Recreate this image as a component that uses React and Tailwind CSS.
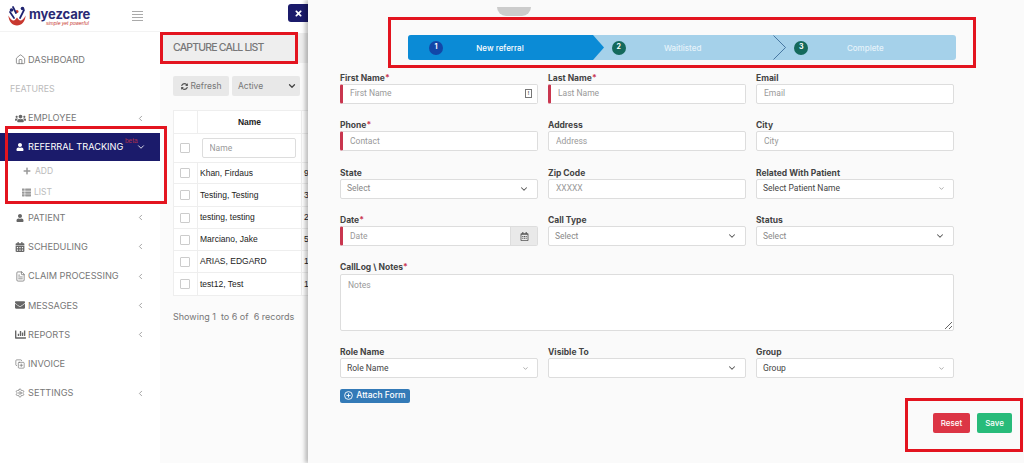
import { ChevronDown, ChevronLeft, Home, Settings, CopyPlus, FileText } from "lucide-react";
import {
  FaUsers,
  FaUser,
  FaPlus,
  FaThList,
  FaCalendarAlt,
  FaEnvelope,
  FaChartBar,
  FaSyncAlt,
  FaTimes,
  FaRegCalendarAlt,
} from "react-icons/fa";

const sans = "font-['Inter','Noto_Sans',sans-serif]";
const arial = "font-['Liberation_Sans',Arial,sans-serif]";
const roboto = "font-['Roboto','Liberation_Sans',sans-serif]";

const Logo = () => (
  <div className="flex items-center pl-[7px] pt-[6px]">
    <svg width="20" height="21" viewBox="0 0 20 21" fill="none">
      <path d="M1.5 9.5c0 6 4 10 8.5 10s8.5-4 8.5-10c-1.5 3.5-3.5 5-5 5-1.500 0-2.500-1.500-3.500-3-1 1.500-2 3-3.500 3s-3.500-1.500-5-5z" fill="#c8382f" />
      <circle cx="4.500" cy="4" r="1.800" fill="#1f2370" />
      <circle cx="15.500" cy="2.500" r="1.800" fill="#1f2370" />
      <circle cx="10" cy="5.500" r="1.500" fill="#c8382f" />
      <path d="M3 6l4 6M17 4l-4 8M6 1l3 6" stroke="#1f2370" strokeWidth="1.700" strokeLinecap="round" />
    </svg>
    <div className="ml-[2px] flex flex-col items-start">
      <span className={`${sans} text-[13px] font-bold leading-[13px] tracking-[-0.1px] text-[#2a2a74]`}>myezcare</span>
      <span className={`${arial} ml-[17px] text-[5px] italic leading-[5px] text-[#c8382f]`}>simple yet powerful</span>
    </div>
  </div>
);

const NavItem = ({ icon, label, arrow = true }) => (
  <div className="flex h-[29.3px] items-center pl-[12px] pr-[15px]">
    <span className="flex w-[16px] justify-center text-[#666]">{icon}</span>
    <span className={`${sans} flex-1 text-[9.200px] text-[#777]`}>{label}</span>
    {arrow && <ChevronLeft size={9} className="text-[#888]" />}
  </div>
);

const Sidebar = () => (
  <aside className="w-[160px] shrink-0 bg-white">
    <div className="flex h-[32px] items-start justify-between border-b border-[#f3f3f3]">
      <Logo />
      <div className="mr-[17px] mt-[11px] flex w-[11px] flex-col gap-[2px]">
        <span className="h-px bg-[#aaa]" />
        <span className="h-px bg-[#aaa]" />
        <span className="h-px bg-[#aaa]" />
        <span className="h-px bg-[#aaa]" />
      </div>
    </div>
    <div className="mt-[13px]">
      <NavItem icon={<Home size={11} strokeWidth={1.500} />} label="DASHBOARD" arrow={false} />
      <div className={`${sans} flex h-[29.3px] items-center pl-[10px] text-[8.800px] text-[#bbb]`}>FEATURES</div>
      <NavItem icon={<FaUsers size={11} />} label="EMPLOYEE" />
      <div className="relative flex h-[28px] items-center bg-[#1b1b6b] pl-[12px] pr-[14px] text-white">
        <span className="flex w-[16px] justify-center"><FaUser size={8} /></span>
        <span className={`${sans} flex-1 text-[9.200px]`}>REFERRAL TRACKING</span>
        <ChevronDown size={10} />
        <span className={`${arial} absolute left-[125px] top-[5px] text-[6.500px] leading-[6px] text-[#b0304a]`}>beta</span>
      </div>
      <div className="flex h-[21px] items-center pl-[23px] text-[#999]">
        <FaPlus size={8} />
        <span className={`${sans} ml-[4px] text-[8.500px] text-[#bbb]`}>ADD</span>
      </div>
      <div className="flex h-[21px] items-center pl-[22px] text-[#999]">
        <FaThList size={9} />
        <span className={`${sans} ml-[3px] text-[8.500px] text-[#bbb]`}>LIST</span>
      </div>
      <NavItem icon={<FaUser size={8} />} label="PATIENT" />
      <NavItem icon={<FaCalendarAlt size={10} />} label="SCHEDULING" />
      <NavItem icon={<FileText size={11} strokeWidth={1.500} />} label="CLAIM PROCESSING" />
      <NavItem icon={<FaEnvelope size={10} />} label="MESSAGES" />
      <NavItem icon={<FaChartBar size={11} />} label="REPORTS" />
      <NavItem icon={<CopyPlus size={10} strokeWidth={1.500} />} label="INVOICE" arrow={false} />
      <NavItem icon={<Settings size={10} strokeWidth={1.500} />} label="SETTINGS" />
    </div>
  </aside>
);

const rows = [
  ["Khan, Firdaus", "9", "h-[21px]"],
  ["Testing, Testing", "3", "h-[23px]"],
  ["testing, testing", "2", "h-[22px]"],
  ["Marciano, Jake", "5", "h-[22px]"],
  ["ARIAS, EDGARD", "1", "h-[22px]"],
  ["test12, Test", "1", "h-[23px]"],
];

const Check = () => <span className="ml-[6px] block h-[10px] w-[10px] rounded-[1px] border border-[#ccc] bg-white" />;

const CallList = () => (
  <section className="w-[148px] shrink-0 overflow-hidden bg-[#fbfbfb]">
    <div className="flex h-[33px] items-start justify-end bg-white pt-[4px]">
      <button className="flex h-[18px] w-[20px] items-center justify-center rounded-l-[3px] bg-[#1b1b6b] text-white">
        <FaTimes size={9} />
      </button>
    </div>
    <div className={`${sans} flex h-[30px] w-[148px] items-center bg-[#eee] pl-[13px] text-[10.500px] font-medium tracking-[-0.8px] text-[#777]`}>
      CAPTURE CALL LIST
    </div>
    <div className="ml-[13px] mt-[13px] flex w-[127px] gap-[3px]">
      <div className="flex h-[20px] w-[56px] items-center justify-center gap-[3px] rounded-[2px] bg-[#e8e8e8] text-[#555]">
        <FaSyncAlt size={7} />
        <span className={`${sans} text-[8.500px] text-[#777]`}>Refresh</span>
      </div>
      <div className="flex h-[20px] w-[68px] items-center justify-between rounded-[2px] bg-[#e8e8e8] pl-[6px] pr-[3px] text-[#444]">
        <span className={`${sans} text-[8.500px] text-[#777]`}>Active</span>
        <ChevronDown size={10} strokeWidth={3} />
      </div>
    </div>
    <table className={`${arial} ml-[13px] mt-[14px] w-[200px] table-fixed border-collapse border border-[#eee] bg-white text-[8.500px] text-[#222]`}>
      <colgroup>
        <col className="w-[24px]" />
        <col className="w-[104px]" />
        <col />
      </colgroup>
      <tbody>
        <tr className="h-[23px] border-b border-[#eee]">
          <td className="border-r border-[#eee]" />
          <td className="border-r border-[#eee] text-center font-bold">Name</td>
          <td />
        </tr>
        <tr className="h-[29px] border-b border-[#eee]">
          <td><Check /></td>
          <td className="border-r border-[#eee] pl-[4px]">
            <input
              placeholder="Name"
              className={`${roboto} h-[20px] w-[94px] rounded-[2px] border border-[#ddd] bg-white px-[7px] text-[8.500px] placeholder:text-[#999]`}
            />
          </td>
          <td />
        </tr>
        {rows.map(([name, first, height]) => (
          <tr key={name} className={`${height} border-b border-[#eee]`}>
            <td className="border-r border-[#eee]"><Check /></td>
            <td className="border-r border-[#eee] pl-[2px]">{name}</td>
            <td className="pl-[2px]">{first}</td>
          </tr>
        ))}
      </tbody>
    </table>
    <p className={`${sans} ml-[13px] mt-[14px] whitespace-pre text-[9px] text-[#777]`}>Showing 1  to 6 of  6 records</p>
  </section>
);

const Badge = ({ n, className }) => (
  <span className={`${sans} flex h-[14px] w-[14px] shrink-0 items-center justify-center rounded-full text-[7px] font-bold text-white ${className}`}>
    {n}
  </span>
);

const Step = ({ n, label, badge, className = "", textClass = "" }) => (
  <div className={`flex w-[182.670px] items-center pl-[21px] ${className}`}>
    <Badge n={n} className={badge} />
    <span className={`${sans} w-[114px] text-center text-[8px] font-medium ${textClass}`}>{label}</span>
  </div>
);

const Stepper = () => (
  <div className="relative ml-[100px] flex h-[25px] w-[548px] rounded-[3px] bg-[#a5d1ea]">
    <div className="absolute left-0 top-0 h-[25px] w-[196px] rounded-l-[3px] bg-[#0b8bd6] [clip-path:polygon(0_0,185px_0,196px_50%,185px_100%,0_100%)]" />
    <Step n="1" label="New referral" badge="bg-[#1247a8]" className="relative" textClass="text-white" />
    <Step n="2" label="Waitlisted" badge="bg-[#14695c]" className="relative" textClass="text-[#e6f3fa]" />
    <svg className="absolute left-[365px] top-0" width="13" height="25" viewBox="0 0 13 25" fill="none">
      <path d="M0.500 0.500L12.500 12.500L0.500 24.500" stroke="#2f5f8f" strokeWidth="0.800" />
    </svg>
    <Step n="3" label="Complete" badge="bg-[#14695c]" className="relative" textClass="text-[#e6f3fa]" />
  </div>
);

const Label = ({ text, required }) => (
  <label className={`${sans} block h-[12px] text-[8.500px] font-bold leading-[12px] text-[#444]`}>
    {text}
    {required && <span className="text-[#c9364f]">*</span>}
  </label>
);

const boxClass = "h-[20px] w-full rounded-[2px] border border-[#ddd] bg-white";

const InputField = ({ label, placeholder, required, trailing }) => (
  <div>
    <Label text={label} required={required} />
    <div className={`${boxClass} flex items-center ${required ? "border-l-[3px] border-l-[#c9364f] pl-[7px]" : "pl-[7px]"}`}>
      <input placeholder={placeholder} className={`${roboto} min-w-0 flex-1 bg-transparent text-[8.500px] outline-none placeholder:text-[#999]`} />
      {trailing}
    </div>
  </div>
);

const SelectField = ({ label, value, dark, small }) => (
  <div>
    <Label text={label} />
    <div className={`${boxClass} flex items-center justify-between pl-[6px] pr-[8px]`}>
      <span className={`${roboto} text-[8.500px] ${dark ? "text-[#444]" : "text-[#888]"}`}>{value}</span>
      <ChevronDown size={small ? 7 : 10} strokeWidth={small ? 2 : 2.500} className={small ? "text-[#777]" : "text-[#555]"} />
    </div>
  </div>
);

const Panel = () => (
  <main className="relative z-10 flex-1 bg-[#fafafa] pt-[35px] shadow-[-3px_0_4px_rgba(0,0,0,0.25)]">
    <span className="absolute left-[189px] top-[7px] h-[9px] w-[34px] rounded-b-[16px] bg-[#ccc]" />
    <Stepper />
    <div className="ml-[32px] mt-[11.500px] w-[614px]">
      <div className="grid grid-cols-3 gap-x-[10px] gap-y-[15.500px]">
        <InputField
          label="First Name"
          placeholder="First Name"
          required
          trailing={
            <span className={`${arial} mr-[5px] flex h-[9px] w-[7px] items-center justify-center border border-[#777] text-[6px] font-bold text-[#666]`}>!</span>
          }
        />
        <InputField label="Last Name" placeholder="Last Name" required />
        <InputField label="Email" placeholder="Email" />
        <InputField label="Phone" placeholder="Contact" required />
        <InputField label="Address" placeholder="Address" />
        <InputField label="City" placeholder="City" />
        <SelectField label="State" value="Select" />
        <InputField label="Zip Code" placeholder="XXXXX" />
        <SelectField label="Related With Patient" value="Select Patient Name" dark small />
        <InputField
          label="Date"
          placeholder="Date"
          required
          trailing={
            <span className="flex h-full w-[27px] items-center justify-center border-l border-[#ddd] bg-[#e9e9e9] text-[#555]">
              <FaRegCalendarAlt size={9} />
            </span>
          }
        />
        <SelectField label="Call Type" value="Select" />
        <SelectField label="Status" value="Select" />
      </div>
      <div className="mt-[15px]">
        <Label text="CallLog \ Notes" required />
        <textarea
          placeholder="Notes"
          className={`${roboto} mt-px block h-[57px] w-full rounded-[2px] border border-[#ddd] bg-white px-[7px] py-[4px] text-[8.500px] outline-none placeholder:text-[#999]`}
        />
      </div>
      <div className="mt-[15px] grid grid-cols-3 gap-x-[10px]">
        <SelectField label="Role Name" value="Role Name" dark small />
        <SelectField label="Visible To" value="" />
        <SelectField label="Group" value="Group" dark small />
      </div>
      <button className="mt-[10.500px] flex h-[14px] w-[70px] items-center justify-center gap-[3px] rounded-[2px] bg-[#337ab7] text-white">
        <svg width="9" height="9" viewBox="0 0 9 9" fill="none" stroke="currentColor" strokeWidth="0.900">
          <circle cx="4.500" cy="4.500" r="3.900" />
          <path d="M4.500 2.500V6.500M2.500 4.500H6.500" />
        </svg>
        <span className={`${sans} text-[8.500px] font-medium`}>Attach Form</span>
      </button>
    </div>
    <div className={`${sans} mr-[12px] mt-[10px] flex justify-end gap-[7px] text-[8px] font-medium text-white`}>
      <button className="h-[20px] w-[37px] rounded-[2px] bg-[#dc3545]">Reset</button>
      <button className="h-[20px] w-[35px] rounded-[2px] bg-[#28bb7a]">Save</button>
    </div>
  </main>
);

export default function App() {
  return (
    <div className="relative flex h-[463px] w-[1024px] overflow-hidden bg-white">
      <Sidebar />
      <CallList />
      <Panel />
      {/* red annotation boxes drawn on top of the screenshot */}
      <span className="absolute left-[160px] top-[32px] z-20 h-[32px] w-[138px] border-[3px] border-[#e3141f]" />
      <span className="absolute left-[5px] top-[126px] z-20 h-[78px] w-[162px] border-[3px] border-[#e3141f]" />
      <span className="absolute left-[388px] top-[17px] z-20 h-[51px] w-[588px] border-[3px] border-[#e3141f]" />
      <span className="absolute left-[905px] top-[398px] z-20 h-[54px] w-[118px] border-[3px] border-[#e3141f]" />
    </div>
  );
}
